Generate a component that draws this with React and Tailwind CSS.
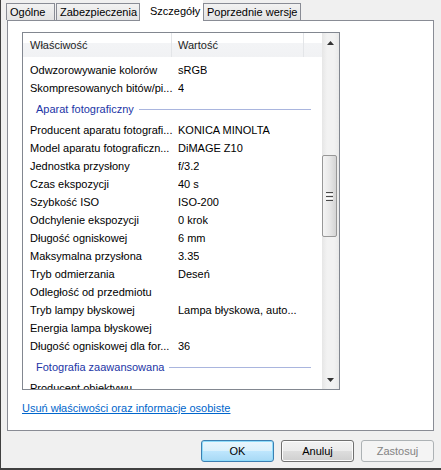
import React from 'react';

const rows1 = [
    ['Odwzorowywanie kolorów', 'sRGB'],
    ['Skompresowanych bitów/pi...', '4'],
];

const rows2 = [
    ['Producent aparatu fotografi...', 'KONICA MINOLTA'],
    ['Model aparatu fotograficzn...', 'DiMAGE Z10'],
    ['Jednostka przysłony', 'f/3.2'],
    ['Czas ekspozycji', '40 s'],
    ['Szybkość ISO', 'ISO-200'],
    ['Odchylenie ekspozycji', '0 krok'],
    ['Długość ogniskowej', '6 mm'],
    ['Maksymalna przysłona', '3.35'],
    ['Tryb odmierzania', 'Deseń'],
    ['Odległość od przedmiotu', ''],
    ['Tryb lampy błyskowej', 'Lampa błyskowa, auto...'],
    ['Energia lampa błyskowej', ''],
    ['Długość ogniskowej dla for...', '36'],
];

const Row = ({ name, value }) => (
    <div className="flex h-[18px] items-center whitespace-nowrap">
        <div className="w-[155px] shrink-0 pl-[7px] overflow-hidden">{name}</div>
        <div className="overflow-hidden">{value}</div>
    </div>
);

const Group = ({ title }) => (
    <div className="flex h-[24px] items-center pl-[13px] pr-[11px]">
        <span className="text-[#1c35a6] whitespace-nowrap">{title}</span>
        <div className="ml-[5px] h-px flex-1 bg-[#a9b5de]" />
    </div>
);

const Tab = ({ label, width, selected }) => {
    if (selected) {
        return (
            <div className={`relative z-10 -mb-px flex h-[21px] items-center bg-white pl-[10px] ${width}`}>
                {label}
            </div>
        );
    }
    return (
        <div className={`flex h-[17px] items-center border border-b-0 border-[#898c95] bg-[linear-gradient(to_bottom,#f2f2f2,#e3e3e3)] pl-[3px] ${width}`}>
            {label}
        </div>
    );
};

const Button = ({ children, variant }) => {
    const styles = {
        default: 'border-[#3c7fb1] bg-[linear-gradient(to_bottom,#eaf6fd_0%,#d9f0fc_50%,#bee6fd_51%,#a7d9f5_100%)] shadow-[inset_0_0_0_1px_#8fdcfb] text-black',
        normal: 'border-[#707070] bg-[linear-gradient(to_bottom,#f2f2f2_0%,#ebebeb_50%,#dddddd_51%,#cfcfcf_100%)] shadow-[inset_0_0_0_1px_#fcfcfc] text-black',
        disabled: 'border-[#adb2b5] bg-[#f4f4f4] text-[#838383]',
    };
    return (
        <div className={`flex h-[22px] w-[73px] items-center justify-center rounded-[3px] border ${styles[variant]}`}>
            {children}
        </div>
    );
};

const Arrow = ({ up }) => (
    <svg width="7" height="4" viewBox="0 0 7 4">
        <polygon points={up ? '0,4 3.5,0 7,4' : '0,0 3.5,4 7,0'} fill="#333" />
    </svg>
);

export default function App() {
    return (
        <div className="h-[470px] w-[441px] overflow-hidden border-b-2 border-l border-[#404040] bg-[#f0f0f0] font-['Liberation_Sans',Arial,sans-serif] text-[11px] leading-[14px] text-black">
            {/* tabs */}
            <div className="flex h-[20px] items-end pl-[5px]">
                <Tab label="Ogólne" width="w-[49px]" />
                <div className="ml-px">
                    <Tab label="Zabezpieczenia" width="w-[84px]" />
                </div>
                <Tab label="Szczegóły" width="w-[63px]" selected />
                <Tab label="Poprzednie wersje" width="w-[98px]" />
            </div>

            {/* panel */}
            <div className="ml-[6px] h-[411px] w-[427px] border border-[#898c95] bg-white pl-[14px] pt-[11px]">
                <div className="flex h-[358px] w-[318px] border border-[#828790]">
                    <div className="flex flex-1 flex-col overflow-hidden">
                        <div className="flex h-[24px] shrink-0 items-center bg-[linear-gradient(to_bottom,#ffffff_0%,#ffffff_42%,#f3f4f6_43%,#f1f2f4_100%)] text-[#1e1e1e]">
                            <div className="flex h-full w-[149px] items-center border-r border-[#e3e5e8] pl-[7px]">Właściwość</div>
                            <div className="flex h-full w-[132px] items-center border-r border-[#e3e5e8] pl-[6px]">Wartość</div>
                        </div>
                        <div className="mt-[4px]">
                            {rows1.map(([n, v]) => <Row key={n} name={n} value={v} />)}
                            <Group title="Aparat fotograficzny" />
                            {rows2.map(([n, v]) => <Row key={n} name={n} value={v} />)}
                            <Group title="Fotografia zaawansowana" />
                            <Row name="Producent obiektywu" value="" />
                        </div>
                    </div>
                    {/* scrollbar */}
                    <div className="flex w-[17px] shrink-0 flex-col bg-[linear-gradient(to_right,#e6e6e6,#f2f2f2_30%,#f2f2f2_70%,#e9e9e9)]">
                        <div className="flex h-[17px] items-center justify-center pt-[2px]">
                            <Arrow up />
                        </div>
                        <div className="flex-1">
                            <div className="mt-[105px] flex h-[82px] w-[15px] items-center justify-center rounded-[2px] border border-[#979797] bg-[linear-gradient(to_right,#f4f4f4,#e8e8e8_50%,#d4d4d4)]">
                                <div className="flex flex-col gap-[1px]">
                                    <div className="h-px w-[7px] bg-[#4a4a4a]" />
                                    <div className="h-px w-[7px] bg-[#ffffff]" />
                                    <div className="h-px w-[7px] bg-[#4a4a4a]" />
                                    <div className="h-px w-[7px] bg-[#ffffff]" />
                                    <div className="h-px w-[7px] bg-[#4a4a4a]" />
                                </div>
                            </div>
                        </div>
                        <div className="flex h-[17px] items-center justify-center pb-[2px]">
                            <Arrow />
                        </div>
                    </div>
                </div>
                <div className="mt-[11px] text-[#0066cc] underline">Usuń właściwości oraz informacje osobiste</div>
            </div>

            {/* buttons */}
            <div className="mt-[9px] flex justify-end gap-[7px] pr-[7px]">
                <Button variant="default">OK</Button>
                <Button variant="normal">Anuluj</Button>
                <Button variant="disabled">Zastosuj</Button>
            </div>
        </div>
    );
}
